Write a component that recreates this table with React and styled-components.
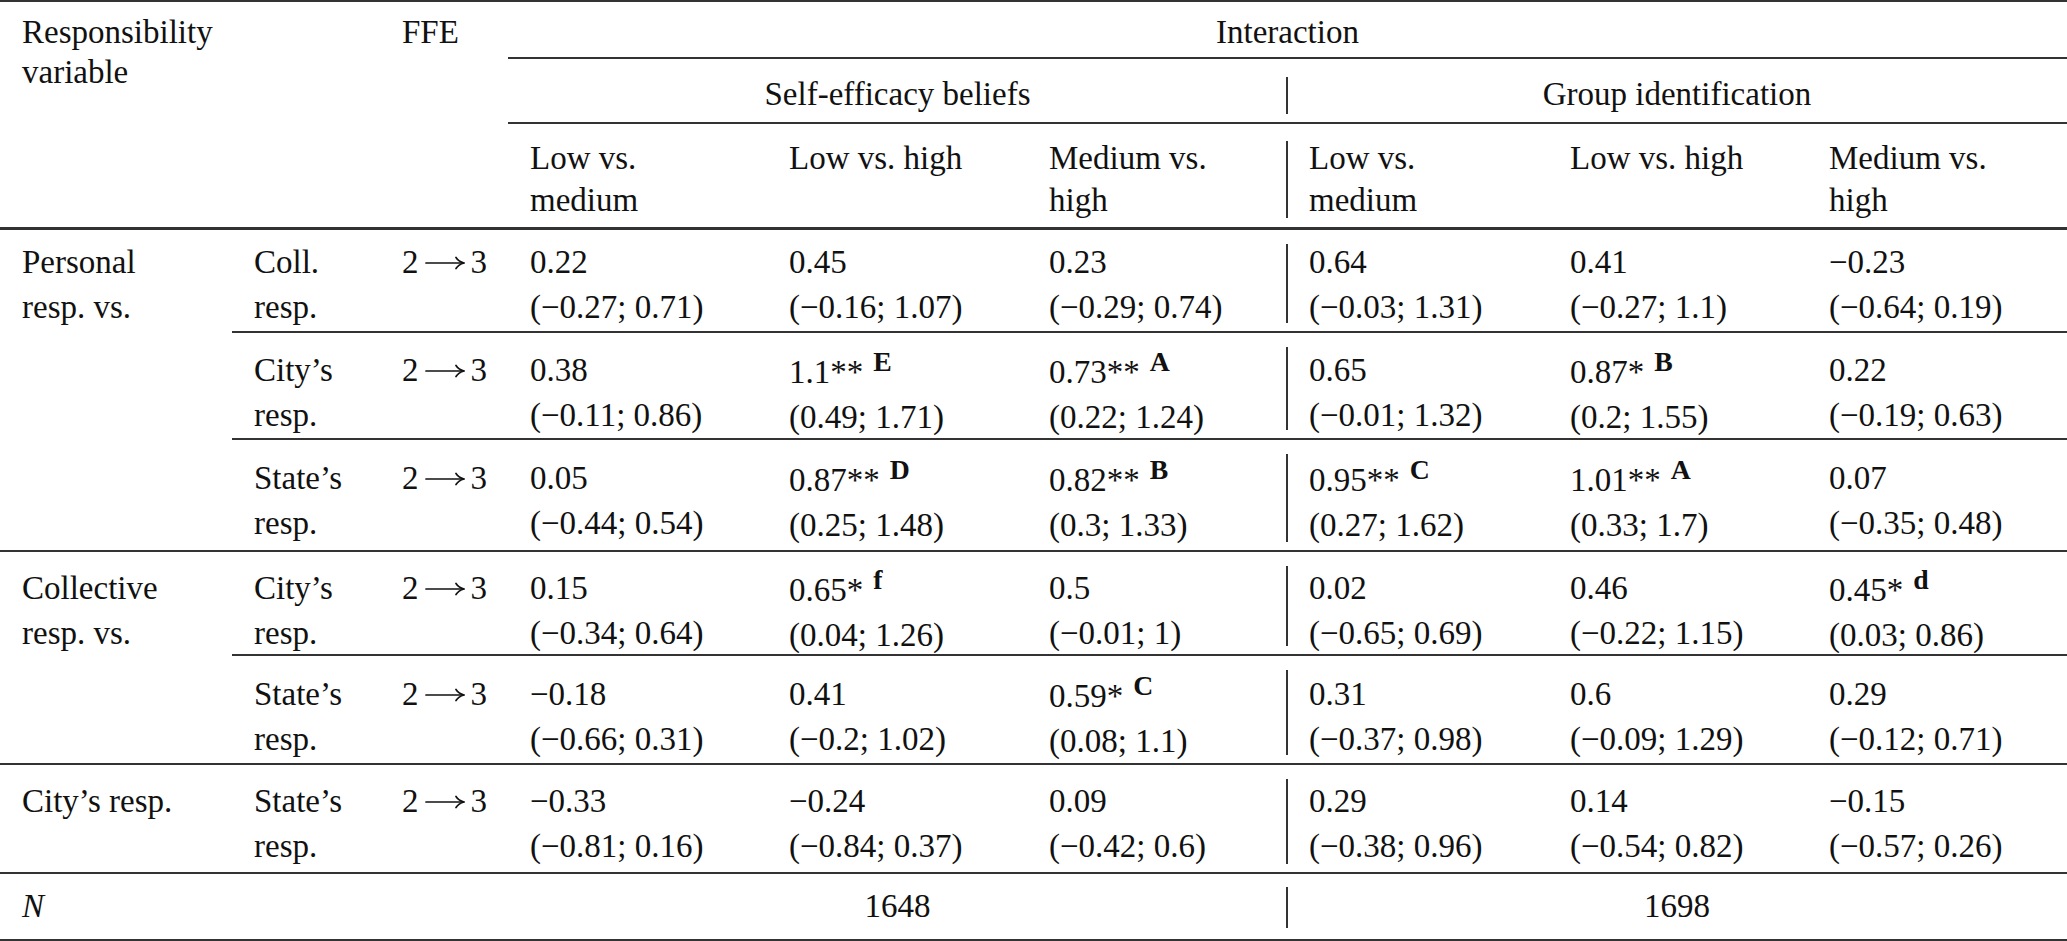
import styled, { createGlobalStyle, css } from "styled-components"

const GlobalStyle = createGlobalStyle`
	html, body {
		margin: 0;
		padding: 0;
		background: #fff;
	}
`

const rule = "#333"

const divider = css`
	&::before {
		content: "";
		position: absolute;
		left: -1px;
		top: ${(p) => p.$top || 14}px;
		bottom: ${(p) => (p.$bottom || 6) + (p.$rule || 0)}px;
		width: 2px;
		background: ${rule};
	}
`

const Grid = styled.div`
	display: grid;
	width: 2067px;
	grid-template-columns: 232px 148px 128px 259px 260px 260px 261px 259px 260px;
	grid-template-rows: 57px 65px 106px 103px 107px 112px 104px 109px 109px 65px;
	border-top: 2px solid ${rule};
	border-bottom: 2px solid ${rule};
	font-family: "Liberation Serif", "Times New Roman", serif;
	font-size: 33px;
	color: #111;
`

const HeadCell = styled.div`
	position: relative;
	box-sizing: border-box;
	grid-column: span ${(p) => p.$span || 1};
	grid-row: span ${(p) => p.$rows || 1};
	text-align: ${(p) => (p.$center ? "center" : "left")};
	padding: 10px 22px 0;
	line-height: 40px;
	border-bottom: ${(p) => p.$rule || 0}px solid ${rule};
	${(p) => p.$divider && divider}
`

const GroupCell = styled(HeadCell)`
	padding-top: 15px;
`

const SubCell = styled(HeadCell)`
	padding-top: 13px;
	line-height: 42px;
`

const Cell = styled.div`
	position: relative;
	box-sizing: border-box;
	grid-column: span ${(p) => p.$span || 1};
	text-align: ${(p) => (p.$center ? "center" : "left")};
	padding: ${(p) => p.$pt}px 22px 0;
	line-height: 45px;
	white-space: nowrap;
	border-bottom: ${(p) => p.$rule || 0}px solid ${rule};
	${(p) => p.$divider && divider}
`

const Mark = styled.span`
	font-weight: bold;
	font-size: 0.84em;
	line-height: 1;
	vertical-align: 0.45em;
	margin-left: 10px;
`

const Italic = styled.i`
	font-style: italic;
`

const ArrowIcon = styled.svg`
	width: 40px;
	height: 14px;
	margin: 0 6px;
	vertical-align: 3px;
`

function Arrow() {
	return (
		<ArrowIcon viewBox="0 0 40 14" fill="none" stroke="#111" strokeWidth="1.7" strokeLinecap="round">
			<path d="M1 7H38" />
			<path d="M31 1.5Q33.5 5.5 39 7Q33.5 8.5 31 12.5" />
		</ArrowIcon>
	)
}

const blocks = [
	{
		label: ["Personal", "resp. vs."],
		rows: [
			{
				v: "Coll.",
				pt: 10,
				cells: [
					["0.22", "(−0.27; 0.71)"],
					["0.45", "(−0.16; 1.07)"],
					["0.23", "(−0.29; 0.74)"],
					["0.64", "(−0.03; 1.31)"],
					["0.41", "(−0.27; 1.1)"],
					["−0.23", "(−0.64; 0.19)"],
				],
			},
			{
				v: "City’s",
				pt: 15,
				cells: [
					["0.38", "(−0.11; 0.86)"],
					["1.1**", "(0.49; 1.71)", "E"],
					["0.73**", "(0.22; 1.24)", "A"],
					["0.65", "(−0.01; 1.32)"],
					["0.87*", "(0.2; 1.55)", "B"],
					["0.22", "(−0.19; 0.63)"],
				],
			},
			{
				v: "State’s",
				pt: 16,
				cells: [
					["0.05", "(−0.44; 0.54)"],
					["0.87**", "(0.25; 1.48)", "D"],
					["0.82**", "(0.3; 1.33)", "B"],
					["0.95**", "(0.27; 1.62)", "C"],
					["1.01**", "(0.33; 1.7)", "A"],
					["0.07", "(−0.35; 0.48)"],
				],
			},
		],
	},
	{
		label: ["Collective", "resp. vs."],
		rows: [
			{
				v: "City’s",
				pt: 14,
				cells: [
					["0.15", "(−0.34; 0.64)"],
					["0.65*", "(0.04; 1.26)", "f"],
					["0.5", "(−0.01; 1)"],
					["0.02", "(−0.65; 0.69)"],
					["0.46", "(−0.22; 1.15)"],
					["0.45*", "(0.03; 0.86)", "d"],
				],
			},
			{
				v: "State’s",
				pt: 16,
				cells: [
					["−0.18", "(−0.66; 0.31)"],
					["0.41", "(−0.2; 1.02)"],
					["0.59*", "(0.08; 1.1)", "C"],
					["0.31", "(−0.37; 0.98)"],
					["0.6", "(−0.09; 1.29)"],
					["0.29", "(−0.12; 0.71)"],
				],
			},
		],
	},
	{
		label: ["City’s resp."],
		rows: [
			{
				v: "State’s",
				pt: 14,
				cells: [
					["−0.33", "(−0.81; 0.16)"],
					["−0.24", "(−0.84; 0.37)"],
					["0.09", "(−0.42; 0.6)"],
					["0.29", "(−0.38; 0.96)"],
					["0.14", "(−0.54; 0.82)"],
					["−0.15", "(−0.57; 0.26)"],
				],
			},
		],
	},
]

const contrasts = [
	["Low vs.", "medium"],
	["Low vs. high"],
	["Medium vs.", "high"],
]

function Lines({ items }) {
	return items.map((t, i) => <div key={i}>{t}</div>)
}

function App() {
	return (
		<>
			<GlobalStyle />
			<Grid>
				<HeadCell $span={2} $rows={3} $rule={3}>
					<Lines items={["Responsibility", "variable"]} />
				</HeadCell>
				<HeadCell $rows={3} $rule={3}>
					FFE
				</HeadCell>
				<HeadCell $span={6} $center $rule={2}>
					Interaction
				</HeadCell>

				<GroupCell $span={3} $center $rule={2}>
					Self-efficacy beliefs
				</GroupCell>
				<GroupCell $span={3} $center $rule={2} $divider $top={18}>
					Group identification
				</GroupCell>

				{[...contrasts, ...contrasts].map((c, i) => (
					<SubCell key={i} $rule={3} $divider={i === 3} $top={17}>
						<Lines items={c} />
					</SubCell>
				))}

				{blocks.map((b) =>
					b.rows.map((r, ri) => [
						<Cell key={`${r.v}-${ri}-label`} $pt={r.pt} $rule={ri === b.rows.length - 1 ? 2 : 0}>
							{ri === 0 && <Lines items={b.label} />}
						</Cell>,
						<Cell key={`${r.v}-${ri}-var`} $pt={r.pt} $rule={2}>
							<Lines items={[r.v, "resp."]} />
						</Cell>,
						<Cell key={`${r.v}-${ri}-ffe`} $pt={r.pt} $rule={2}>
							2<Arrow />3
						</Cell>,
						...r.cells.map(([est, ci, mark], i) => (
							<Cell key={`${r.v}-${ri}-${i}`} $pt={r.pt} $rule={2} $divider={i === 3}>
								<div>
									{est}
									{mark && <Mark>{mark}</Mark>}
								</div>
								<div>{ci}</div>
							</Cell>
						)),
					])
				)}

				<Cell $span={3} $pt={10}>
					<Italic>N</Italic>
				</Cell>
				<Cell $span={3} $pt={10} $center>
					1648
				</Cell>
				<Cell $span={3} $pt={10} $center $divider $top={13} $bottom={11}>
					1698
				</Cell>
			</Grid>
		</>
	)
}

export default App
